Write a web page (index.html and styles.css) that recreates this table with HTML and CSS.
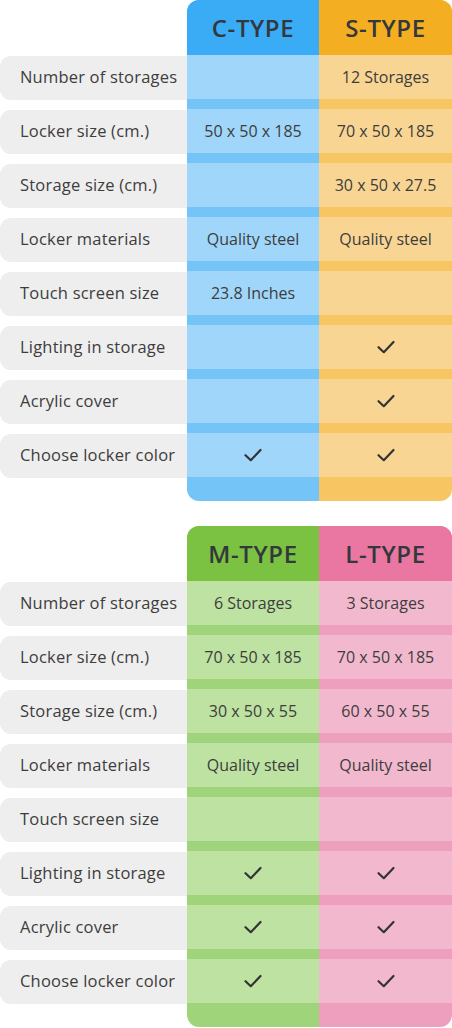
FILE: index.html
```html
<!DOCTYPE html>
<html lang="en">
<head>
<meta charset="utf-8">
<title>Locker comparison</title>
<link rel="stylesheet" href="styles.css">
</head>
<body>
<svg width="0" height="0" class="defs" aria-hidden="true">
  <symbol id="check" viewBox="0 0 20 20">
    <path d="M2.5 10.2 L7.8 15.2 L17.5 5" fill="none" stroke="currentColor" stroke-width="2.2" stroke-linecap="round" stroke-linejoin="round"/>
  </symbol>
</svg>

<section class="compare">
  <div class="labels">
    <div class="spacer"></div>
    <div class="rows">
      <div class="label">Number of storages</div>
      <div class="label">Locker size (cm.)</div>
      <div class="label">Storage size (cm.)</div>
      <div class="label">Locker materials</div>
      <div class="label">Touch screen size</div>
      <div class="label">Lighting in storage</div>
      <div class="label">Acrylic cover</div>
      <div class="label">Choose locker color</div>
    </div>
  </div>
  <div class="col col-c first">
    <div class="head">C-TYPE</div>
    <div class="rows">
      <div class="cell"></div>
      <div class="cell">50 x 50 x 185</div>
      <div class="cell"></div>
      <div class="cell">Quality steel</div>
      <div class="cell">23.8 Inches</div>
      <div class="cell"></div>
      <div class="cell"></div>
      <div class="cell"><svg class="check"><use href="#check"/></svg></div>
    </div>
  </div>
  <div class="col col-s last">
    <div class="head">S-TYPE</div>
    <div class="rows">
      <div class="cell">12 Storages</div>
      <div class="cell">70 x 50 x 185</div>
      <div class="cell">30 x 50 x 27.5</div>
      <div class="cell">Quality steel</div>
      <div class="cell"></div>
      <div class="cell"><svg class="check"><use href="#check"/></svg></div>
      <div class="cell"><svg class="check"><use href="#check"/></svg></div>
      <div class="cell"><svg class="check"><use href="#check"/></svg></div>
    </div>
  </div>
</section>

<section class="compare">
  <div class="labels">
    <div class="spacer"></div>
    <div class="rows">
      <div class="label">Number of storages</div>
      <div class="label">Locker size (cm.)</div>
      <div class="label">Storage size (cm.)</div>
      <div class="label">Locker materials</div>
      <div class="label">Touch screen size</div>
      <div class="label">Lighting in storage</div>
      <div class="label">Acrylic cover</div>
      <div class="label">Choose locker color</div>
    </div>
  </div>
  <div class="col col-m first">
    <div class="head">M-TYPE</div>
    <div class="rows">
      <div class="cell">6 Storages</div>
      <div class="cell">70 x 50 x 185</div>
      <div class="cell">30 x 50 x 55</div>
      <div class="cell">Quality steel</div>
      <div class="cell"></div>
      <div class="cell"><svg class="check"><use href="#check"/></svg></div>
      <div class="cell"><svg class="check"><use href="#check"/></svg></div>
      <div class="cell"><svg class="check"><use href="#check"/></svg></div>
    </div>
  </div>
  <div class="col col-l last">
    <div class="head">L-TYPE</div>
    <div class="rows">
      <div class="cell">3 Storages</div>
      <div class="cell">70 x 50 x 185</div>
      <div class="cell">60 x 50 x 55</div>
      <div class="cell">Quality steel</div>
      <div class="cell"></div>
      <div class="cell"><svg class="check"><use href="#check"/></svg></div>
      <div class="cell"><svg class="check"><use href="#check"/></svg></div>
      <div class="cell"><svg class="check"><use href="#check"/></svg></div>
    </div>
  </div>
</section>
</body>
</html>
```

FILE: styles.css
```css
* { box-sizing: border-box; }

html, body {
  margin: 0;
  padding: 0;
  background: #ffffff;
}

body {
  font-family: "Open Sans", "Liberation Sans", sans-serif;
  color: #3b3b3b;
  width: 452px;
}

.defs {
  position: absolute;
  width: 0;
  height: 0;
}

.compare {
  display: flex;
  width: 452px;
  height: 501px;
}

.compare + .compare {
  margin-top: 25px;
}

.labels {
  width: 187px;
  flex: none;
}

.spacer {
  height: 56px;
}

.rows {
  display: flex;
  flex-direction: column;
  gap: 10px;
}

.label {
  height: 44px;
  background: #eeeeee;
  border-radius: 11px 0 0 11px;
  display: flex;
  align-items: center;
  padding-left: 20px;
  padding-bottom: 3px;
  font-size: 16.5px;
  letter-spacing: 0.2px;
  color: #3d3d3d;
  white-space: nowrap;
}

.col {
  display: flex;
  flex-direction: column;
  padding-bottom: 24px;
}

.col-c, .col-m { width: 132px; }
.col-s, .col-l { width: 133px; }

.first { border-radius: 12px 0 0 12px; overflow: hidden; }
.last  { border-radius: 0 12px 12px 0; overflow: hidden; }

.head {
  height: 56px;
  display: flex;
  align-items: center;
  justify-content: center;
  padding-bottom: 1px;
  font-size: 24px;
  font-weight: 600;
  color: #33383c;
  letter-spacing: 0.6px;
}

.cell {
  height: 44px;
  display: flex;
  align-items: center;
  justify-content: center;
  padding-bottom: 1px;
  font-size: 16px;
  color: #3d3d3d;
  white-space: nowrap;
}

.check {
  width: 20px;
  height: 20px;
  color: #333;
}

.col-c { background: #74c4f8; }
.col-c .head { background: #3aabf5; }
.col-c .cell { background: #a0d6fa; }

.col-s { background: #f7c562; }
.col-s .head { background: #f3ae22; }
.col-s .cell { background: #f9d594; }

.col-m { background: #a0d47a; }
.col-m .head { background: #7bc142; }
.col-m .cell { background: #bde2a1; }

.col-l { background: #ee9fbd; }
.col-l .head { background: #e977a1; }
.col-l .cell { background: #f2b9ce; }
```
